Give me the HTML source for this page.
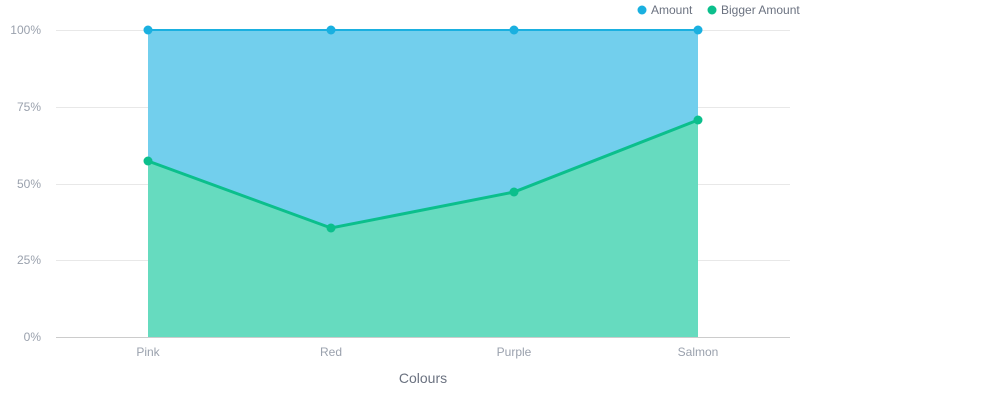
<!DOCTYPE html>
<html><head><style>
html,body{margin:0;padding:0;background:#fff;width:1008px;height:400px;overflow:hidden}
svg{display:block;font-family:"Liberation Sans",sans-serif}
</style></head><body>
<svg width="1008" height="400" viewBox="0 0 1008 400">
<g stroke="#e8e8e8" stroke-width="1">
<line x1="56" y1="30.5" x2="790" y2="30.5"/>
<line x1="56" y1="107.5" x2="790" y2="107.5"/>
<line x1="56" y1="184.5" x2="790" y2="184.5"/>
<line x1="56" y1="260.5" x2="790" y2="260.5"/>
</g>
<line x1="56" y1="337.5" x2="790" y2="337.5" stroke="#ccc"/>
<g fill="#9aa1ad" font-size="12" text-anchor="end">
<text x="41" y="34">100%</text><text x="41" y="111">75%</text><text x="41" y="188">50%</text><text x="41" y="264">25%</text><text x="41" y="341">0%</text>
</g>
<polygon points="148,30 331,30 514,30 698,30 698,120 514,192 331,228 148,161" fill="#72cfed"/>
<polygon points="148,161 331,228 514,192 698,120 698,337 148,337" fill="#66dbbf"/>
<polyline points="148,30 698,30" stroke="#1ab0e0" stroke-width="2" fill="none"/>
<polyline points="148,161 331,228 514,192 698,120" stroke="#0bbf8c" stroke-width="3" fill="none"/>
<g fill="#1ab0e0"><circle cx="148" cy="30" r="4.5"/><circle cx="331" cy="30" r="4.5"/><circle cx="514" cy="30" r="4.5"/><circle cx="698" cy="30" r="4.5"/></g>
<g fill="#0bbf8c"><circle cx="148" cy="161" r="4.5"/><circle cx="331" cy="228" r="4.5"/><circle cx="514" cy="192" r="4.5"/><circle cx="698" cy="120" r="4.5"/></g>
<g fill="#9aa1ad" font-size="12" text-anchor="middle">
<text x="148" y="356">Pink</text><text x="331" y="356">Red</text><text x="514" y="356">Purple</text><text x="698" y="356">Salmon</text>
</g>
<text x="423" y="383" fill="#6b7280" font-size="14" text-anchor="middle">Colours</text>
<circle cx="642" cy="10" r="4.5" fill="#1ab0e0"/>
<text x="651" y="14" fill="#6b7280" font-size="12">Amount</text>
<circle cx="712" cy="10" r="4.5" fill="#0bbf8c"/>
<text x="721" y="14" fill="#6b7280" font-size="12">Bigger Amount</text>
</svg>
</body></html>
